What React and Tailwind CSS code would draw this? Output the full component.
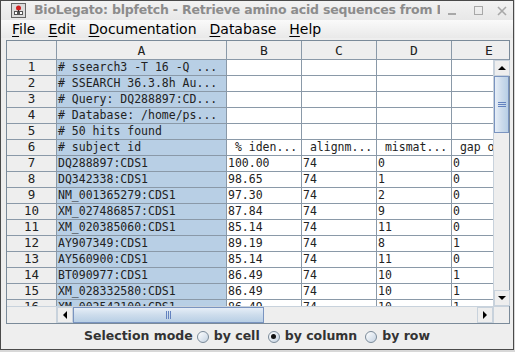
import React from 'react'

const rows = [
  ['# ssearch3 -T 16 -Q ...', '', '', '', ''],
  ['# SSEARCH 36.3.8h Au...', '', '', '', ''],
  ['# Query: DQ288897:CD...', '', '', '', ''],
  ['# Database: /home/ps...', '', '', '', ''],
  ['# 50 hits found', '', '', '', ''],
  ['# subject id', ' % iden...', ' alignm...', ' mismat...', ' gap o'],
  ['DQ288897:CDS1', '100.00', '74', '0', '0'],
  ['DQ342338:CDS1', '98.65', '74', '1', '0'],
  ['NM_001365279:CDS1', '97.30', '74', '2', '0'],
  ['XM_027486857:CDS1', '87.84', '74', '9', '0'],
  ['XM_020385060:CDS1', '85.14', '74', '11', '0'],
  ['AY907349:CDS1', '89.19', '74', '8', '1'],
  ['AY560900:CDS1', '85.14', '74', '11', '0'],
  ['BT090977:CDS1', '86.49', '74', '10', '1'],
  ['XM_028332580:CDS1', '86.49', '74', '10', '1'],
  ['XM_002542100:CDS1', '86.49', '74', '10', '1'],
]

const widths = ['w-[170px]', 'w-[75px]', 'w-[75px]', 'w-[75px]', 'w-[75px]']

function Arrow({ dir }) {
  const pts = {
    up: '0,5 8,5 4,1',
    down: '0,1 8,1 4,5',
    left: '5,0 5,8 1,4',
    right: '1,0 1,8 5,4',
  }[dir]
  const vertical = dir === 'up' || dir === 'down'
  return (
    <div className="w-[16px] h-[16px] shrink-0 bg-[#eeeeee] border border-[#c8d2dc] flex items-center justify-center">
      <svg width={vertical ? 8 : 6} height={vertical ? 6 : 8} viewBox={vertical ? '0 0 8 6' : '0 0 6 8'}>
        <polygon points={pts} fill="#000" />
      </svg>
    </div>
  )
}

function Radio({ checked, label }) {
  return (
    <div className="flex items-center gap-[5px]">
      <div className="w-[12px] h-[12px] rounded-full border border-[#7a8a99] bg-gradient-to-br from-white to-[#c5d3e2] flex items-center justify-center">
        {checked && <div className="w-[5px] h-[5px] rounded-full bg-[#111]" />}
      </div>
      <span>{label}</span>
    </div>
  )
}

export default function App() {
  return (
    <div className="w-[515px] h-[352px] bg-[#d8d8d8] font-['DejaVu_Sans',sans-serif]">
      <div className="w-[514px] h-[350px] border border-[#4a4a4a] bg-[#eeeeee] flex flex-col overflow-hidden">
        {/* title bar */}
        <div className="h-[19px] shrink-0 flex items-center bg-gradient-to-b from-[#f2f2f2] to-[#e8e8e8]">
          <div className="ml-[10px] w-[15px] h-[15px] border border-[#666] bg-[#dcdcdc] flex items-center justify-center">
            <svg width="13" height="13" viewBox="0 0 13 13">
              <rect x="2" y="7" width="9" height="4" fill="#555" />
              <rect x="3" y="8" width="2" height="2" fill="#fff" />
              <rect x="8" y="8" width="2" height="2" fill="#fff" />
              <circle cx="6.5" cy="4" r="2.5" fill="#d02020" />
              <rect x="6" y="6" width="1" height="2" fill="#333" />
            </svg>
          </div>
          <span className="ml-[8px] text-[12.5px] tracking-[-0.2px] font-bold text-[#8c8c8c] whitespace-nowrap overflow-hidden w-[406px]">
            BioLegato: blpfetch - Retrieve amino acid sequences from I
          </span>
          <div className="ml-auto flex items-center mr-[6px] gap-[12px]">
            <span className="w-[8px] h-[2px] bg-[#a8a8a8] mt-[6px]" />
            <span className="w-[9px] h-[9px] border border-[#a8a8a8] ml-[6px]" />
            <svg width="10" height="10" viewBox="0 0 10 10" className="ml-[2px]">
              <path d="M1 1 L9 9 M9 1 L1 9" stroke="#a8a8a8" strokeWidth="1.6" />
            </svg>
          </div>
        </div>
        {/* menu bar */}
        <div className="h-[18px] shrink-0 flex items-center bg-gradient-to-b from-[#fafafa] to-[#e9e9e9] text-[14px] text-black pl-[5px] gap-[1px]">
          {[['F', 'ile'], ['E', 'dit'], ['D', 'ocumentation'], ['D', 'atabase'], ['H', 'elp']].map(([a, b], i) => (
            <span key={i} className="px-[6px] leading-[18px]">
              <span className="underline underline-offset-[2px]">{a}</span>
              {b}
            </span>
          ))}
        </div>
        <div className="h-[2px] shrink-0" />
        {/* scroll pane */}
        <div className="ml-[5px] w-[504px] h-[284px] shrink-0 border border-[#7a8a99] flex flex-col bg-[#eeeeee]">
          {/* column header */}
          <div className="h-[19px] shrink-0 flex overflow-hidden font-['DejaVu_Sans_Mono',monospace] text-[13px] text-[#222]">
            <div className="w-[50px] shrink-0 border-r border-b border-[#8a99a8] bg-[#eeeeee]" />
            {['A', 'B', 'C', 'D', 'E'].map((c, i) => (
              <div key={c} className={`${widths[i]} shrink-0 border-r border-b border-[#8a99a8] bg-[#eeeeee] flex items-center justify-center leading-none`}>
                {c}
              </div>
            ))}
          </div>
          <div className="flex h-[246px] shrink-0">
            {/* viewport */}
            <div className="w-[486px] h-[246px] overflow-hidden bg-white">
              {rows.map((r, ri) => (
                <div key={ri} className="h-[16px] flex">
                  <div className="w-[50px] shrink-0 border-r border-b border-[#8a99a8] bg-[#eeeeee] flex items-center justify-center font-['DejaVu_Sans_Mono',monospace] text-[12.5px] text-[#222] leading-none">
                    {ri + 1}
                  </div>
                  {r.map((v, ci) => (
                    <div
                      key={ci}
                      className={`${widths[ci]} shrink-0 border-r border-b border-[#8a99a8] ${ci === 0 ? 'bg-[#b8cfe5]' : 'bg-white'} pl-[1px] flex items-center whitespace-pre overflow-hidden font-['DejaVu_Sans_Mono',monospace] text-[11.5px] text-[#222] leading-none`}
                    >
                      {v}
                    </div>
                  ))}
                </div>
              ))}
            </div>
            {/* vertical scrollbar */}
            <div className="w-[16px] h-[246px] flex flex-col bg-[#eeeeee] border-l border-[#c8d2dc]">
              <Arrow dir="up" />
              <div className="flex-1 flex flex-col">
                <div className="h-[57px] border border-[#7a94c0] bg-gradient-to-r from-[#e6eef7] via-[#cddcec] to-[#b8cfe5] flex flex-col items-center justify-center gap-[1px]">
                  <div className="w-[8px] h-[1px] bg-[#6382bf]" />
                  <div className="w-[8px] h-[1px] bg-[#6382bf]" />
                  <div className="w-[8px] h-[1px] bg-[#6382bf]" />
                </div>
              </div>
              <Arrow dir="down" />
            </div>
          </div>
          {/* horizontal scrollbar row */}
          <div className="flex h-[17px] shrink-0 border-t border-[#c8d2dc]">
            <div className="w-[50px] shrink-0 bg-[#eeeeee] border-r border-[#c8d2dc]" />
            <div className="w-[436px] flex bg-[#eeeeee]">
              <Arrow dir="left" />
              <div className="flex-1 flex">
                <div className="w-[191px] h-[16px] border border-[#7a94c0] bg-gradient-to-b from-[#e6eef7] via-[#cddcec] to-[#b8cfe5] flex items-center justify-center gap-[1px]">
                  <div className="w-[1px] h-[8px] bg-[#6382bf]" />
                  <div className="w-[1px] h-[8px] bg-[#6382bf]" />
                  <div className="w-[1px] h-[8px] bg-[#6382bf]" />
                </div>
              </div>
              <Arrow dir="right" />
            </div>
            <div className="w-[16px] bg-[#eeeeee] border-l border-[#c8d2dc]" />
          </div>
        </div>
        {/* selection mode */}
        <div className="flex-1 flex items-center justify-center text-[12.5px] font-bold text-[#333] gap-[4px]">
          <span>Selection mode</span>
          <div className="flex items-center gap-[8px]">
            <Radio label="by cell" />
            <Radio checked label="by column" />
            <Radio label="by row" />
          </div>
        </div>
      </div>
    </div>
  )
}
